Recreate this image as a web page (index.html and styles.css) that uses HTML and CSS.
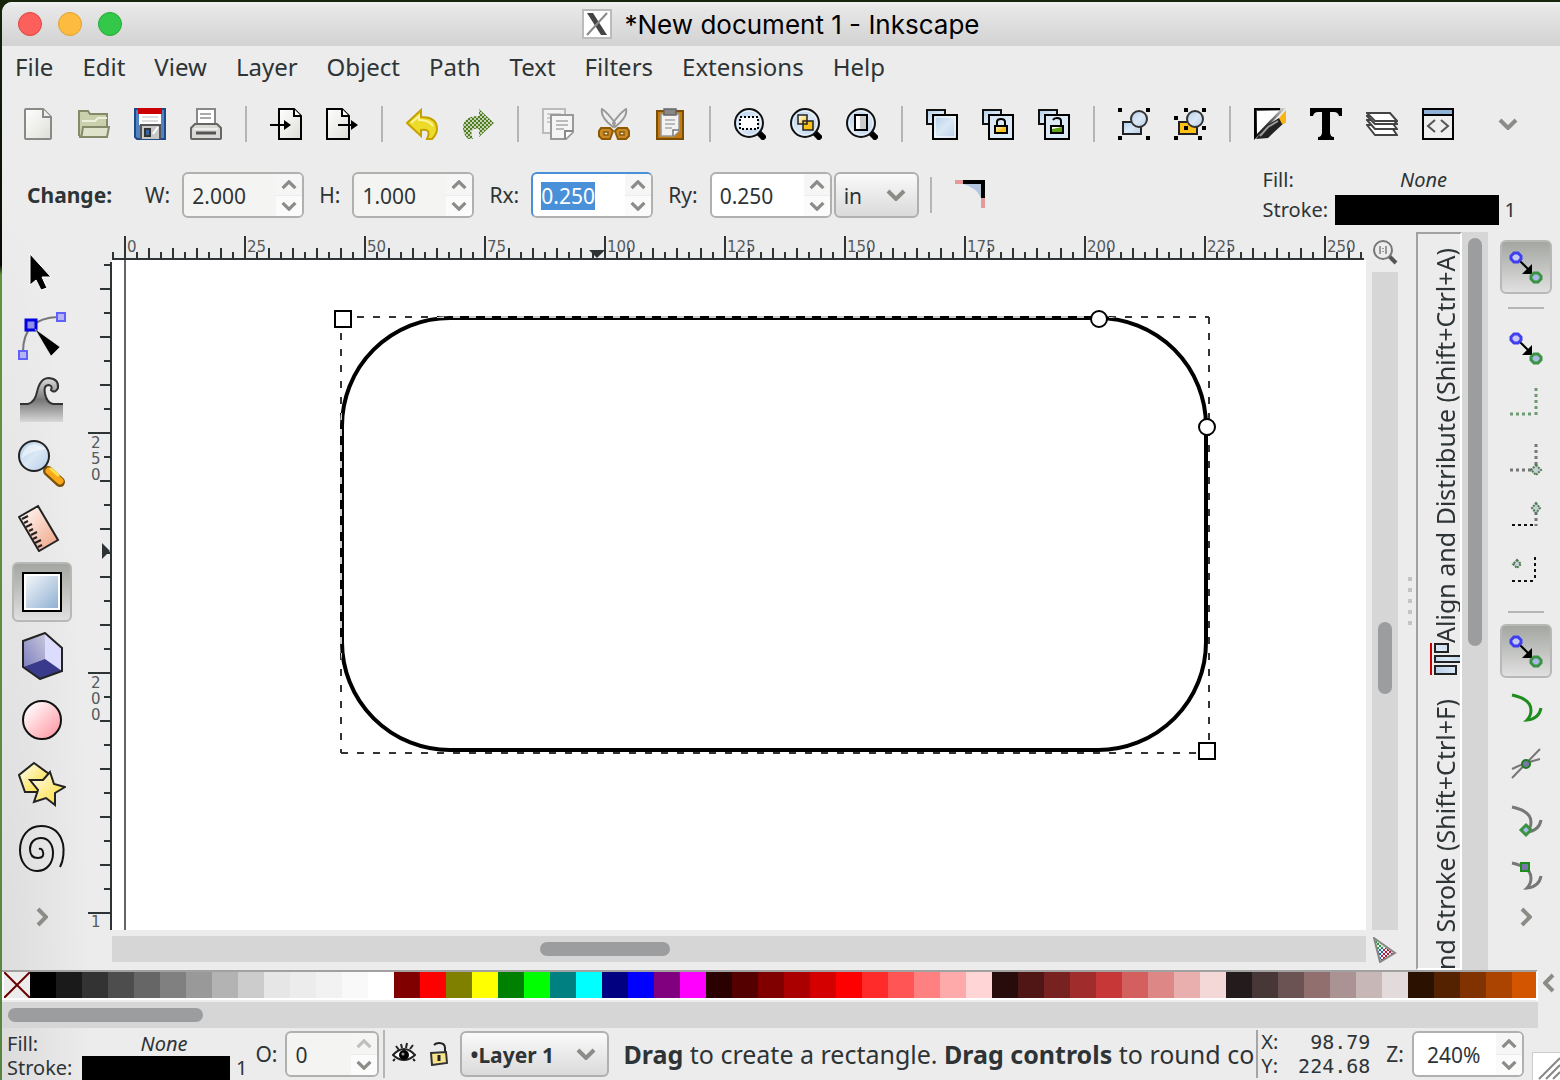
FILE: index.html
```html
<!DOCTYPE html>
<html lang="en">
<head>
    <meta charset="UTF-8">
    <meta name="viewport" content="width=device-width, initial-scale=1.0">
    <title>New document 1 - Inkscape</title>
    <link rel="stylesheet" href="styles.css">
</head>
<body>
    <!-- shared gradients, patterns and symbols -->
    <svg class="defs" aria-hidden="true">
        <defs>
            <linearGradient id="blue" x1="0" y1="0" x2="1" y2="1"><stop offset="0" stop-color="#f4f6f8"/><stop offset="1" stop-color="#8fb1d4"/></linearGradient>
            <linearGradient id="lens" x1="0" y1="0" x2="1" y2="1"><stop offset="0" stop-color="#aecbe8"/><stop offset=".5" stop-color="#dbe8f5"/><stop offset="1" stop-color="#b4cde8"/></linearGradient>
            <linearGradient id="pink" x1="0" y1="0" x2="1" y2="1"><stop offset=".1" stop-color="#fff"/><stop offset="1" stop-color="#ff8f9b"/></linearGradient>
            <linearGradient id="yellow" x1="0" y1="0" x2="1" y2="1"><stop offset="0" stop-color="#fff"/><stop offset=".8" stop-color="#fce14d"/></linearGradient>
            <linearGradient id="gold" x1="0" y1="0" x2="1" y2="1"><stop offset="0" stop-color="#fff"/><stop offset=".6" stop-color="#fbc116"/></linearGradient>
            <linearGradient id="skin" x1="0" y1="0" x2="1" y2="1"><stop offset="0" stop-color="#fff"/><stop offset="1" stop-color="#f0a080"/></linearGradient>
            <linearGradient id="page" x1="0" y1="0" x2="1" y2="1"><stop offset="0" stop-color="#fff"/><stop offset="1" stop-color="#deded8"/></linearGradient>
            <linearGradient id="wave" x1="0" y1="0" x2="0" y2="1"><stop offset="0" stop-color="#ddd"/><stop offset=".5" stop-color="#777"/><stop offset="1" stop-color="#d8d8d8"/></linearGradient>
            <linearGradient id="boxside" x1="0" y1="1" x2="1" y2="0"><stop offset="0" stop-color="#7f7fc0"/><stop offset="1" stop-color="#c8c8dc"/></linearGradient>
            <linearGradient id="ink" x1="0" y1="1" x2="1" y2="0"><stop offset="0" stop-color="#000"/><stop offset=".5" stop-color="#444"/><stop offset="1" stop-color="#ddd"/></linearGradient>
            <pattern id="checker" width="4" height="4" patternUnits="userSpaceOnUse"><path fill="#c5d2b4" d="M0 0h4v4H0z"/><path fill="#4e7d22" d="M0 0h2v2H0zM2 2h2v2H2z"/></pattern>
            <pattern id="screen" width="4" height="4" patternUnits="userSpaceOnUse"><path fill="#ececec" d="M0 0h2v2H0zM2 2h2v2H2z"/></pattern>
            <pattern id="ticks-x" x="12" width="120" height="28" patternUnits="userSpaceOnUse">
                <path fill="#2e3436" d="M0 4h2v24H0zM12 20h2v8h-2zM24 16h2v12h-2zM36 20h2v8h-2zM48 16h2v12h-2zM60 20h2v8h-2zM72 16h2v12h-2zM84 20h2v8h-2zM96 16h2v12h-2zM108 20h2v8h-2z"/>
            </pattern>
            <pattern id="ticks-y" y="172" width="24" height="240" patternUnits="userSpaceOnUse">
                <path fill="#2e3436" d="M0 0h24v2H0zM16 24h8v2h-8zM12 48h12v2H12zM16 72h8v2h-8zM12 96h12v2H12zM16 120h8v2h-8zM12 144h12v2H12zM16 168h8v2h-8zM12 192h12v2H12zM16 216h8v2h-8z"/>
            </pattern>
        </defs>
        <symbol id="down" viewBox="0 0 20 12"><path class="chev" d="M2 2l8 8 8-8"/></symbol>
        <symbol id="up" viewBox="0 0 20 12"><path class="chev" d="M2 10l8-8 8 8"/></symbol>
        <symbol id="right" viewBox="0 0 12 20"><path class="chev" d="M2 2l8 8-8 8"/></symbol>
        <symbol id="left" viewBox="0 0 12 20"><path class="chev" d="M10 2L2 10l8 8"/></symbol>
        <symbol id="magnifier" viewBox="0 0 32 32">
            <path stroke="#000" stroke-width="6" d="M23 23l8 8"/>
            <circle cx="15" cy="15" r="14" fill="url(#lens)" stroke="#111" stroke-width="2"/>
            <circle cx="15" cy="15" r="12" fill="none" stroke="#fff" stroke-opacity=".7"/>
        </symbol>
        <symbol id="snap" viewBox="0 0 36 36">
            <path d="M12 12l10 10" stroke="#000" stroke-width="2"/>
            <path d="M24 15v10H14z"/>
            <path d="M6 4h4l3 3v3l-3 3H6l-3-3V7z" fill="#c8c8f4" stroke="#3f3ff0" stroke-width="3"/>
            <path d="M26 24h4l3 3v3l-3 3h-4l-3-3v-3z" fill="#a9b9e4" stroke="#3a9343" stroke-width="3"/>
        </symbol>
        <symbol id="curve" viewBox="0 0 36 36"><path fill="none" stroke="currentColor" stroke-width="3" d="M4 5q19 4 19 15 0 6-4 10 12-1 14-12"/></symbol>
    </svg>

    <div class="window">
        <header class="titlebar">
            <div class="lights">
                <button class="light close" aria-label="Close"></button>
                <button class="light minimise" aria-label="Minimise"></button>
                <button class="light zoom" aria-label="Zoom"></button>
            </div>
            <h1 class="title">
                <svg width="30" height="30" viewBox="0 0 30 30"><path fill="#fff" stroke="#bbb" stroke-width="2" d="M1 1h28v28H1z"/><path fill="#444" d="M5 4h6l14 22h-6z"/><path stroke="#888" stroke-width="2" d="M25 4L5 26"/></svg>
                <span>*New document 1 - Inkscape</span>
            </h1>
        </header>

        <nav class="menu">
            <button>File</button><button>Edit</button><button>View</button><button>Layer</button><button>Object</button><button>Path</button><button>Text</button><button>Filters</button><button>Extensions</button><button>Help</button>
        </nav>

        <div class="toolbar">
            <button aria-label="New"><svg viewBox="0 0 32 32"><path d="M3 2q0-1 1-1h17l8 8v21q0 1-1 1H4q-1 0-1-1z" fill="url(#page)" stroke="#888a85" stroke-width="2"/><path d="M21 1v8h8" fill="#eee" stroke="#888a85" stroke-width="2"/></svg></button>
            <button aria-label="Open"><svg viewBox="0 0 32 32"><path d="M1 28V3h9l2 3h17v14" fill="#c9d0ab" stroke="#858a6b" stroke-width="2"/><path d="M4 13h13l3-3h9" fill="none" stroke="#eef0de" stroke-width="2"/><path d="M5 19h26l-2 10H1q3 0 3-4z" fill="#dfe3cb" stroke="#858a6b" stroke-width="2"/></svg></button>
            <button aria-label="Save"><svg viewBox="0 0 32 32"><path d="M1 1h30v30H3l-2-2z" fill="#4f83c4" stroke="#204a87" stroke-width="2"/><path fill="#fff" d="M5 0h22v17H5z"/><path fill="#c00" d="M4 0h24v6H4z"/><path d="M8 9h16M8 13h16" stroke="#ddd" stroke-width="2"/><path d="M7 31V17h19v14" fill="#c8c8c8" stroke="#555" stroke-width="2"/><path fill="#3465a4" stroke="#333" stroke-width="2" d="M11 21h5v7h-5z"/><path stroke="#fff" stroke-width="2" d="M19 26l5-7"/></svg></button>
            <button aria-label="Print"><svg viewBox="0 0 32 32"><path d="M7 18V1h18v17" fill="#fff" stroke="#888" stroke-width="2"/><path d="M10 6h11M10 10h11" stroke="#aaa" stroke-width="2"/><path d="M2 31q-1 0-1-1V20l4-4h22l4 4v10q0 1-1 1z" fill="#d9dad6" stroke="#666" stroke-width="2"/><path d="M4 21h24" stroke="#eee" stroke-width="2"/><path d="M6 25h20" stroke="#555" stroke-width="3"/></svg></button>
            <span class="sep"></span>
            <button aria-label="Import"><svg viewBox="0 0 32 32"><path d="M9 1h15l7 7v23H9z" fill="url(#page)" stroke="#000" stroke-width="2"/><path d="M24 1v7h7" fill="#fff" stroke="#000" stroke-width="2"/><path d="M0 17h16" stroke="#000" stroke-width="2"/><path d="M14 12l7 5-7 5z"/></svg></button>
            <button aria-label="Export"><svg viewBox="0 0 32 32"><path d="M1 1h15l7 7v23H1z" fill="url(#page)" stroke="#000" stroke-width="2"/><path d="M16 1v7h7" fill="#fff" stroke="#000" stroke-width="2"/><path d="M12 17h16" stroke="#000" stroke-width="2"/><path d="M25 12l7 5-7 5z"/></svg></button>
            <span class="sep"></span>
            <button aria-label="Undo"><svg viewBox="0 0 32 32"><path d="M1 15L15 2v7q16 0 16 12 0 5-5 10h-5q5-11-6-9v6z" fill="#eddb2a" stroke="#c4a000" stroke-width="2"/><path d="M5 15l8-7v4q10 0 14 6" fill="none" stroke="#fbf3a0" stroke-width="2"/></svg></button>
            <button aria-label="Redo"><svg viewBox="0 0 32 32"><path d="M32 15L17 1v7Q1 8 1 20q0 6 5 11h5q-5-12 6-10v8z" fill="url(#checker)"/></svg></button>
            <span class="sep"></span>
            <button aria-label="Copy"><svg viewBox="0 0 32 32"><path d="M1 1h22v24H1z" fill="#f2f2f2" stroke="#bbb" stroke-width="2"/><path d="M5 6h14M5 10h4M5 14h4" stroke="#ccc" stroke-width="2"/><path d="M9 7h22v17l-7 7H9z" fill="#f5f5f5" stroke="#999" stroke-width="2"/><path d="M14 13h12M14 17h12M14 21h8" stroke="#bbb" stroke-width="2"/><path d="M23 31v-8h8" fill="#fff" stroke="#888" stroke-width="2"/></svg></button>
            <button aria-label="Cut"><svg viewBox="0 0 32 32"><path d="M4 1q-2 8 11 18l2-4Q10 5 4 1zM28 1q2 8-11 18l-2-4Q22 5 28 1z" fill="#eee" stroke="#999" stroke-width="2"/><path d="M3 20h9l3 3-3 8H4l-3-3v-5zM29 20h-9l-3 3 3 8h8l3-3v-5z" fill="#c98a2a" stroke="#8f5902" stroke-width="2"/><path d="M6 24h4v3H6zM22 24h4v3h-4z" fill="#eee" stroke="#8f5902" stroke-width="1.5"/></svg></button>
            <button aria-label="Paste"><svg viewBox="0 0 32 32"><path d="M3 3h26v28H3z" fill="#c17d11" stroke="#7c4d02" stroke-width="2"/><path d="M7 6h18v17l-5 5H7z" fill="#f2f2f2" stroke="#999" stroke-width="1.5"/><path d="M10 1h12v6H10z" fill="#888" stroke="#666" stroke-width="1.5"/><path d="M11 12h10M11 16h10M11 20h7" stroke="#bbb" stroke-width="2"/><path d="M19 28v-6h6" fill="#fff" stroke="#777" stroke-width="1.5"/></svg></button>
            <span class="sep"></span>
            <button aria-label="Zoom selection"><svg viewBox="0 0 32 32"><use href="#magnifier"/><path d="M6 9h18v12H6z" fill="#fff" stroke="#000" stroke-width="2" stroke-dasharray="2 2"/></svg></button>
            <button aria-label="Zoom drawing"><svg viewBox="0 0 32 32"><use href="#magnifier"/><path d="M8 7h9v9H8zM13 13h10v9H13z" fill="url(#gold)" stroke="#222" stroke-width="1.5"/></svg></button>
            <button aria-label="Zoom page"><svg viewBox="0 0 32 32"><use href="#magnifier"/><path d="M9 7h12v15H9z" fill="#ccc" stroke="#000" stroke-width="2"/><path fill="#fff" d="M10 8h4v13h-4z"/></svg></button>
            <span class="sep"></span>
            <button aria-label="Duplicate"><svg viewBox="0 0 32 32"><path d="M1 2h18v14H1z" fill="url(#lens)" stroke="#111" stroke-width="2"/><path d="M7 7h24v24H7z" fill="url(#lens)" stroke="#000" stroke-width="2"/><path d="M9 9h20v20H9z" fill="none" stroke="#fff"/></svg></button>
            <button aria-label="Clone"><svg viewBox="0 0 32 32"><path d="M1 2h18v14H1z" fill="url(#lens)" stroke="#111" stroke-width="2"/><path d="M7 7h24v24H7z" fill="#dbe8f5" stroke="#000" stroke-width="2"/><path d="M15 18v-4q0-3 4-3t4 3v4" fill="none" stroke="#000" stroke-width="2"/><path d="M13 18h12v7H13z" fill="url(#gold)" stroke="#000" stroke-width="2"/></svg></button>
            <button aria-label="Unlink clone"><svg viewBox="0 0 32 32"><path d="M1 2h18v14H1z" fill="url(#lens)" stroke="#111" stroke-width="2"/><path d="M7 7h24v24H7z" fill="#dbe8f5" stroke="#000" stroke-width="2"/><path d="M15 12q1-2 4-2 4 0 4 3v5" fill="none" stroke="#000" stroke-width="2"/><path d="M13 18h12v7H13z" fill="#fff" stroke="#000" stroke-width="2"/><path fill="#5fa01a" d="M14 21l10-2v5H14z"/></svg></button>
            <span class="sep"></span>
            <button aria-label="Group"><svg viewBox="0 0 32 32"><path d="M5 14h18v12H5z" fill="url(#lens)" stroke="#222" stroke-width="2"/><circle cx="21" cy="11" r="8" fill="url(#lens)" stroke="#333" stroke-width="2"/><path d="M0 0h4v4H0zM28 0h4v4h-4zM0 28h4v4H0zM28 28h4v4h-4z"/></svg></button>
            <button aria-label="Ungroup"><svg viewBox="0 0 32 32"><path d="M5 14h18v12H5z" fill="#fbc116" stroke="#222" stroke-width="2"/><circle cx="21" cy="11" r="8" fill="url(#lens)" stroke="#333" stroke-width="2"/><path d="M10 0h4v4h-4zM28 0h4v4h-4zM0 8h4v4H0zM10 18h4v4h-4zM28 18h4v4h-4zM0 28h4v4H0zM24 28h4v4h-4z"/></svg></button>
            <span class="sep"></span>
            <button aria-label="Fill and stroke"><svg viewBox="0 0 32 32"><path fill="url(#ink)" d="M0 0h32L0 32z"/><path fill="#000" d="M0 0h26v2H2v28H0z"/><path fill="#fff" d="M3 3h22L3 26z"/><path fill="#222" d="M32 13l-7-3L12 18 2 31l12-1z"/><path d="M6 28l8-9 10-6" fill="none" stroke="#999" stroke-width="2"/><path fill="#fbb415" d="M25 10l7-8v13l-4 1z"/></svg></button>
            <button aria-label="Text and font"><svg viewBox="0 0 32 32"><path d="M0 0h32v8h-3q-1-4-5-4h-4v20q0 5 4 5v3H8v-3q4 0 4-5V4H8Q4 4 3 8H0z"/></svg></button>
            <button aria-label="Layers"><svg viewBox="0 0 32 32"><g fill="#fff" stroke="#444" stroke-width="2"><path d="M1 17h23l7 10H9z"/><path d="M1 12h23l7 9H9z"/><path d="M1 8h23l7 8H9z"/><path d="M1 5h23l7 8H9z"/></g></svg></button>
            <button aria-label="XML editor"><svg viewBox="0 0 32 32"><path d="M1 1h30v30H1z" fill="#eee" stroke="#000" stroke-width="2"/><path d="M2 2h28v4H2z" fill="#8fb1d9"/><path d="M1 7h30" stroke="#000" stroke-width="2"/><path d="M13 12l-7 6 7 6M19 12l7 6-7 6" fill="none" stroke="#555" stroke-width="2"/></svg></button>
            <button class="more" aria-label="More commands"><svg class="arrow" viewBox="0 0 20 12"><use href="#down"/></svg></button>
        </div>

        <div class="controls">
            <strong class="change">Change:</strong>
            <label for="w">W:</label>
            <div class="spin muted"><input id="w" type="text" value="2.000"><button aria-label="Increase width"><svg><use href="#up"/></svg></button><button aria-label="Decrease width"><svg><use href="#down"/></svg></button></div>
            <label for="h">H:</label>
            <div class="spin muted"><input id="h" type="text" value="1.000"><button aria-label="Increase height"><svg><use href="#up"/></svg></button><button aria-label="Decrease height"><svg><use href="#down"/></svg></button></div>
            <label for="rx">Rx:</label>
            <div class="spin active"><input id="rx" type="text" value="0.250" autofocus><button aria-label="Increase Rx"><svg><use href="#up"/></svg></button><button aria-label="Decrease Rx"><svg><use href="#down"/></svg></button></div>
            <label for="ry">Ry:</label>
            <div class="spin"><input id="ry" type="text" value="0.250"><button aria-label="Increase Ry"><svg><use href="#up"/></svg></button><button aria-label="Decrease Ry"><svg><use href="#down"/></svg></button></div>
            <select class="unit" aria-label="Unit"><option>in</option></select>
            <span class="sep"></span>
            <button class="corner" aria-label="Not rounded"><svg width="32" height="30" viewBox="0 0 32 30"><path fill="#b5c7df" d="M8 4h18v14Q22 8 8 4z"/><path fill="#e29a9a" d="M0 0h10v4H0zM26 18h4v10h-4z"/><path d="M8 0h22v18h-4V4H8z"/></svg></button>
            <div class="style">
                <span>Fill:</span><em>None</em><i></i>
                <span>Stroke:</span><button class="ink" aria-label="Stroke colour"></button><span>1</span>
            </div>
        </div>

        <main class="workspace">
            <div class="toolbox">
                <button aria-label="Select"><svg viewBox="0 0 48 48"><path d="M12 6v31l6-5 5 10 6-2-5-11h9z" stroke="#fff"/></svg></button>
                <button aria-label="Edit nodes"><svg viewBox="0 0 48 48"><path d="M5 40Q5 6 40 5" fill="none" stroke="#777" stroke-width="2"/><path d="M8 8h10v10H8z" fill="#8f8fe8" stroke="#0000e0" stroke-width="3"/><path d="M39 1h8v8h-8zM1 39h8v8H1z" fill="#b5b5f5" stroke="#6060ff" stroke-width="2"/><path d="M17 17l25 18-9 9-6-10z" stroke="#fff" stroke-width=".5"/></svg></button>
                <button aria-label="Tweak"><svg viewBox="0 0 48 48"><path d="M2 28h8q7-2 9-12Q22 2 31 2q10 1 9 10-3 6-7 2 2-4-2-5-6 0-4 9 2 9 8 10h10v18H2z" fill="url(#wave)"/><path d="M2 28h8q7-2 9-12Q22 2 31 2q10 1 9 10-3 6-7 2 2-4-2-5-6 0-4 9 2 9 8 10h10" fill="none" stroke="#333" stroke-width="2"/></svg></button>
                <button aria-label="Zoom"><svg viewBox="0 0 48 48"><path d="M27 27l5 5" stroke="#666" stroke-width="5"/><path d="M30 31l12 11" stroke="#7a5210" stroke-width="10" stroke-linecap="round"/><path d="M31 31l11 10" stroke="#f9a81a" stroke-width="7" stroke-linecap="round"/><path d="M32 28l9 8" stroke="#ffe14d" stroke-width="3"/><circle cx="16" cy="16" r="15" fill="url(#lens)" stroke="#222" stroke-width="2"/><path d="M4 18Q5 5 17 4L28 9Q14 10 4 18z" fill="#fff" opacity=".5"/></svg></button>
                <button aria-label="Measure"><svg viewBox="0 0 48 48"><path d="M20 2l20 34-19 11L1 13z" fill="url(#skin)" stroke="#222" stroke-width="2"/><path d="M4 15l6-3M6 19l4-2M8 23l6-3M11 27l4-2M13 31l6-3M15 35l4-2M17 39l6-3M20 43l4-2" stroke="#222" stroke-width="2"/></svg></button>
                <button class="on" aria-label="Rectangle"><svg viewBox="0 0 48 48"><path d="M5 5h38v38H5z" fill="#fff" stroke="#000" stroke-width="2"/><path d="M8 8h32v32H8z" fill="url(#blue)"/></svg></button>
                <button aria-label="3D box"><svg viewBox="0 0 48 48"><path d="M27 1v26L5 35V9z" fill="url(#boxside)"/><path d="M27 1l17 15v23L27 27z" fill="#dcdcff"/><path d="M27 27l17 12-22 8L5 35z" fill="#3a3a8c"/><path d="M27 1l17 15v23l-22 8L5 35V9z" fill="none" stroke="#222" stroke-width="2"/></svg></button>
                <button aria-label="Ellipse"><svg viewBox="0 0 48 48"><circle cx="24" cy="24" r="19" fill="url(#pink)" stroke="#111" stroke-width="2"/></svg></button>
                <button aria-label="Star"><svg viewBox="0 0 48 48"><g fill="url(#yellow)" stroke="#222" stroke-width="2"><path d="M16 3l15 11-6 18H7L1 15z"/><path d="M32 12l4 12 11 3-10 6v12l-9-7-12 4 4-12-8-10h13z"/></g></svg></button>
                <button aria-label="Spiral"><svg viewBox="0 0 48 48"><path fill="none" stroke="#111" stroke-width="2" d="M42 43C46 36 46 25 45 20 42 8 34 2 23 2 10 2 2 13 2 26c0 12 7 21 17 21s16-8 16-18c0-9-5-15-12-15s-11 5-11 11 3 9 8 9 6-3 5-6q-1-4-4-3"/></svg></button>
                <button class="more" aria-label="More tools"><svg class="side" viewBox="0 0 12 20"><use href="#right"/></svg></button>
            </div>

            <div class="editor">
                <svg class="ruler-x">
                    <rect width="100%" height="28" fill="url(#ticks-x)"/>
                    <rect x="2" y="26" width="100%" height="2" fill="#2e3436"/>
                    <path fill="#2e3436" d="M477 18h16l-8 8z"/>
                    <g id="labels-x"></g>
                </svg>
                <svg class="ruler-y">
                    <rect y="2" width="24" height="100%" fill="url(#ticks-y)"/>
                    <rect x="22" y="2" width="2" height="100%" fill="#2e3436"/>
                    <path fill="#2e3436" d="M14 283v16l8-8z"/>
                    <text x="3" y="188">2</text><text x="3" y="204">5</text><text x="3" y="220">0</text>
                    <text x="3" y="428">2</text><text x="3" y="444">0</text><text x="3" y="460">0</text>
                    <text x="3" y="667">1</text>
                </svg>
                <svg class="canvas">
                    <rect width="100%" height="100%" fill="#fff"/>
                    <rect x="12" width="2" height="100%" fill="#666"/>
                    <rect x="230" y="58" width="864" height="432" rx="108" fill="none" stroke="#000" stroke-width="4"/>
                    <path class="bbox" d="M229 57h868M229 493h868M229 57v436M1097 57v436"/>
                    <g fill="#fff" stroke="#000" stroke-width="2">
                        <path d="M223 51h16v16h-16zM1087 483h16v16h-16z"/>
                        <circle cx="987" cy="59" r="8"/>
                        <circle cx="1095" cy="167" r="8"/>
                    </g>
                </svg>
                <div class="track track-x"><div class="thumb"></div></div>
            </div>

            <div class="side-scroll">
                <button aria-label="Zoom 1:1"><svg width="26" height="26" viewBox="0 0 26 26"><path d="M17 17l7 7" stroke="#555" stroke-width="4"/><circle cx="11" cy="11" r="9" fill="#ececec" stroke="#777" stroke-width="2"/><path d="M8 7v8M14 7v8M11 9v1M11 12v1" stroke="#999" stroke-width="2"/></svg></button>
                <div class="track track-y"><div class="thumb"></div></div>
                <button aria-label="Colour management"><svg width="24" height="26" viewBox="0 0 24 26"><path fill="#2a9a3a" d="M1 1l11 10-8 5z"/><path fill="#2463a8" d="M3 14l9-4-4 15z"/><path fill="#b02040" d="M11 10l11 6-14 8z"/><path fill="url(#screen)" d="M0 0h24v26H0z"/><path d="M1 1l21 15L7 25z" fill="none" stroke="#888" stroke-width="2"/></svg></button>
            </div>

            <div class="grip"></div>

            <div class="dock">
                <div class="tabs">
                    <button><svg width="30" height="32" viewBox="0 0 30 32"><path stroke="#c00" stroke-width="2" d="M29 0v32"/><path d="M12 1h13v8H12zM-1 13h26v6H-1zM4 23h21v8H4z" transform="matrix(1 0 0 -1 0 32)" fill="url(#lens)" stroke="#222" stroke-width="2"/></svg>Align and Distribute (Shift+Ctrl+A)</button>
                    <button>Fill and Stroke (Shift+Ctrl+F)</button>
                </div>
                <div class="track track-dock"><div class="thumb"></div></div>
            </div>

            <div class="snapbar">
                <button class="on" aria-label="Enable snapping"><svg><use href="#snap"/></svg></button>
                <hr>
                <button aria-label="Snap bounding boxes"><svg><use href="#snap"/></svg></button>
                <button aria-label="Snap to edges"><svg viewBox="0 0 36 36"><path class="dots green" d="M2 28h24M28 2v27"/></svg></button>
                <button aria-label="Snap to corners"><svg viewBox="0 0 36 36"><path class="dots" d="M2 28h24M28 2v27"/><path class="node" d="M28 23l5 5-5 5-5-5z"/></svg></button>
                <button aria-label="Snap edge midpoints"><svg viewBox="0 0 36 36"><path class="dots" d="M28 14v14"/><path class="dots black" d="M4 27h24"/><path class="node" d="M28 5l4 5-4 5-4-5z"/></svg></button>
                <button aria-label="Snap box centers"><svg viewBox="0 0 36 36"><path class="dots black" d="M4 27h24M27 3v24"/><path class="node" d="M9 6l4 4-4 4-4-4z"/></svg></button>
                <hr>
                <button class="on" aria-label="Snap nodes"><svg><use href="#snap"/></svg></button>
                <button class="green" aria-label="Snap to paths"><svg><use href="#curve"/></svg></button>
                <button aria-label="Snap to intersections"><svg viewBox="0 0 36 36"><path d="M4 32L32 3M4 23q12-6 28-10" fill="none" stroke="#777" stroke-width="2"/><circle cx="18" cy="18" r="4" fill="#77a" stroke="#1e7d1e" stroke-width="2"/></svg></button>
                <button aria-label="Snap cusp nodes"><svg viewBox="0 0 36 36"><use href="#curve"/><path d="M18 23l5 5-5 5-5-5z" fill="#a9b9e9" stroke="#3a9343" stroke-width="3"/></svg></button>
                <button aria-label="Snap smooth nodes"><svg viewBox="0 0 36 36"><use href="#curve"/><path d="M13 5h8v8h-8z" fill="#77a" stroke="#1e8d1e" stroke-width="2"/></svg></button>
                <button class="more" aria-label="More snapping"><svg class="side" viewBox="0 0 12 20"><use href="#right"/></svg></button>
            </div>
        </main>

        <div class="palette">
            <div class="swatches">
                <button class="swatch none" aria-label="No colour"><svg width="26" height="26" viewBox="0 0 26 26"><path d="M0 0l26 26M26 0L0 26" stroke="#6b0000" stroke-width="2"/></svg></button>
            </div>
            <button class="more" aria-label="Palette menu"><svg class="side" viewBox="0 0 12 20"><use href="#left"/></svg></button>
            <div class="track track-palette"><div class="thumb"></div></div>
        </div>

        <footer class="status">
            <div class="style">
                <span>Fill:</span><em>None</em><i></i>
                <span>Stroke:</span><button class="ink" aria-label="Stroke colour"></button><span>1</span>
            </div>
            <label for="opacity">O:</label>
            <div class="spin muted opacity"><input id="opacity" type="text" value="0"><button class="off" aria-label="Increase opacity"><svg><use href="#up"/></svg></button><button aria-label="Decrease opacity"><svg><use href="#down"/></svg></button></div>
            <span class="sep"></span>
            <div class="toggles">
                <button aria-label="Layer visibility"><svg width="24" height="24" viewBox="0 0 24 24"><path d="M1 13q11-12 22 0-11 10-22 0z" fill="#fff" stroke="#222" stroke-width="2"/><circle cx="12" cy="13" r="5"/><circle cx="11" cy="12" r="1.5" fill="#999"/><path d="M4 4l3 4M9 2l1 4M14 6l1-5M18 7l3-4M3 17l-2 2M21 17l2 2" stroke="#222" stroke-width="2"/></svg></button>
                <button aria-label="Lock layer"><svg width="24" height="24" viewBox="0 0 24 24"><path d="M6 3q2-2 5-2 6 0 6 5v6" fill="none" stroke="#222" stroke-width="2"/><path d="M3 11l15-1 1 11-15 2z" fill="#f5e48a" stroke="#333" stroke-width="2"/><path d="M11 13v6" stroke="#222" stroke-width="3"/></svg></button>
            </div>
            <select class="layer" aria-label="Layer"><option>•Layer 1</option></select>
            <p class="hint"><b>Drag</b> to create a rectangle. <b>Drag controls</b> to round corners</p>
            <dl class="coords"><dt>X:</dt><dd>98.79</dd><dt>Y:</dt><dd>224.68</dd></dl>
            <label for="zoom">Z:</label>
            <div class="spin zoomlevel"><input id="zoom" type="text" value="240%"><button aria-label="Zoom in"><svg><use href="#up"/></svg></button><button aria-label="Zoom out"><svg><use href="#down"/></svg></button></div>
            <svg class="resize" viewBox="0 0 28 28"><path fill="#fff" stroke="#ccc" stroke-width="2" d="M0 0h30v30H0z"/><path d="M7 27L28 6M14 27l14-14M21 27l7-7" stroke="#888" stroke-width="2"/></svg>
        </footer>
    </div>

    <script>
        const colours = [
            '#000', '#1a1a1a', '#333', '#4d4d4d', '#666', '#808080', '#999', '#b3b3b3', '#ccc', '#e6e6e6', '#ececec', '#f2f2f2', '#f9f9f9', '#fff',
            '#800000', '#f00', '#808000', '#ff0', '#008000', '#0f0', '#008080', '#0ff', '#000080', '#00f', '#800080', '#f0f',
            '#2b0000', '#500', '#800000', '#a00', '#d40000', '#f00', '#ff2a2a', '#f55', '#ff8080', '#faa', '#ffd5d5',
            '#280b0b', '#501616', '#782121', '#a02c2c', '#c83737', '#d35f5f', '#de8787', '#e9afaf', '#f4d7d7',
            '#241c1c', '#483737', '#6c5353', '#916f6f', '#ac9393', '#c8b7b7', '#e3dbdb',
            '#2b1100', '#520', '#803300', '#a40', '#d45500'
        ];
        const swatches = document.querySelector('.swatches');
        colours.forEach((colour) => {
            const swatch = document.createElement('button');
            swatch.className = 'swatch';
            swatch.style.background = colour;
            swatch.setAttribute('aria-label', colour);
            swatches.appendChild(swatch);
        });

        // one label every 25 units, 120px apart
        let labels = '';
        for (let i = 0; i <= 10; i++) {
            labels += `<text x="${15 + i * 120}" y="20">${i * 25}</text>`;
        }
        document.querySelector('#labels-x').innerHTML = labels;

        const rx = document.querySelector('#rx');
        rx.focus();
        rx.select();
    </script>
</body>
</html>
```
FILE: styles.css
```css
*{
    box-sizing: border-box;
}
body{
    margin: 0;
    height: 100vh;
    overflow: hidden;
    padding: 2px 0 0 2px;
    background: linear-gradient(#16240c 0, #050a03 265px, #5d9440 275px, #568540 100%);
    font-family: "Noto Sans", "Open Sans", sans-serif;
    font-size: 21px;
    color: #2e3436;
}
.defs{
    position: absolute;
    width: 0;
    height: 0;
}
button{
    padding: 0;
    border: none;
    background: none;
    font: inherit;
    color: inherit;
}
svg{
    display: block;
}
.chev{
    fill: none;
    stroke: #8a8c87;
    stroke-width: 4;
}
.window{
    display: flex;
    flex-direction: column;
    height: 100%;
    border-radius: 10px 0 0 0;
    overflow: hidden;
    background: radial-gradient(90px 900px at 0 100%, rgba(0,0,0,.07), rgba(0,0,0,0)), #ececec;
}

/* title bar */
.titlebar{
    display: grid;
    grid-template-columns: 1fr auto 1fr;
    align-items: center;
    flex: none;
    height: 44px;
    background: linear-gradient(#f2f2f2, #e8e8e8 10%, #d2d2d2);
}
.lights{
    display: flex;
    gap: 16px;
    padding-left: 16px;
}
.light{
    width: 24px;
    height: 24px;
    border-radius: 50%;
    border: 1px solid;
}
.close{
    background: #fc605c;
    border-color: #e0443e;
}
.minimise{
    background: #fdbc40;
    border-color: #dfa033;
}
.zoom{
    background: #34c84a;
    border-color: #24a935;
}
.title{
    display: flex;
    align-items: center;
    gap: 12px;
    margin: 0;
    font-family: Inter, sans-serif;
    font-size: 26px;
    font-weight: 400;
    color: #000;
}

/* menu */
.menu{
    display: flex;
    flex: none;
    gap: 29px;
    height: 44px;
    padding: 0 0 4px 13px;
    font-size: 24px;
}

/* command bar */
.toolbar{
    display: flex;
    align-items: center;
    flex: none;
    height: 68px;
    padding: 0 24px 0 8px;
}
.toolbar button{
    display: grid;
    place-items: center;
    width: 56px;
    height: 56px;
}
.toolbar svg{
    width: 32px;
    height: 32px;
}
.toolbar .more{
    margin-left: auto;
}
.toolbar .arrow{
    width: 20px;
    height: 12px;
}
.sep{
    width: 2px;
    height: 36px;
    margin: 0 11px;
    background: #b5b5b5;
}

/* rectangle controls */
.controls{
    display: flex;
    align-items: center;
    flex: none;
    height: 74px;
    padding: 0 44px 0 25px;
}
.controls label{
    margin: 0 12px 0 15px;
}
.controls .change{
    margin-right: 18px;
}
.spin{
    display: grid;
    grid-template-columns: 1fr 26px;
    grid-template-rows: 1fr 1fr;
    width: 122px;
    height: 46px;
    border: 2px solid #b0b1ae;
    border-radius: 6px;
    overflow: hidden;
    background: #fff;
}
.spin input{
    grid-row: 1 / 3;
    width: 100%;
    min-width: 0;
    padding: 2px 0 0 8px;
    border: none;
    outline: none;
    background: none;
    font: inherit;
    color: inherit;
}
.spin button{
    display: grid;
    place-items: center;
    background: #f6f6f6;
}
.spin button + button{
    background: #fbfbfb;
    border-top: 1px solid #ececec;
}
.spin svg{
    width: 16px;
    height: 10px;
}
.spin .off{
    opacity: .5;
}
.muted{
    background: #f4f4f2;
}
.active{
    border-color: #4a90d9 #b0b1ae #b0b1ae #4a90d9;
}
input::selection{
    background: #4a90d9;
    color: #fff;
}
select{
    appearance: none;
    height: 46px;
    padding: 2px 8px 0;
    border: 2px solid #b0b1ae;
    border-radius: 6px;
    background: url("data:image/svg+xml,%3Csvg xmlns='http://www.w3.org/2000/svg' width='20' height='12'%3E%3Cpath d='M2 2l8 8 8-8' fill='none' stroke='%238a8c87' stroke-width='4'/%3E%3C/svg%3E") right 11px center no-repeat, linear-gradient(#fafafa, #dadada);
    font: inherit;
    color: inherit;
}
.unit{
    width: 85px;
    margin-left: 2px;
}
.corner{
    margin-left: 12px;
}
.style{
    display: grid;
    grid-template-columns: 66px 164px auto;
    align-items: center;
    column-gap: 6px;
    font-size: 20px;
    line-height: 30px;
}
.style em{
    text-align: center;
    padding-left: 14px;
}
.ink{
    align-self: stretch;
    background: #000;
}
.controls .style{
    margin-left: auto;
}

/* work area */
.workspace{
    display: flex;
    flex: 1;
    min-height: 0;
}
.toolbox{
    display: flex;
    flex-direction: column;
    align-items: center;
    flex: none;
    gap: 4px;
    width: 86px;
    padding: 10px 6px 0 0;
}
.toolbox button{
    display: grid;
    place-items: center;
    flex: none;
    width: 60px;
    height: 60px;
}
.toolbox svg{
    width: 48px;
    height: 48px;
}
.on{
    border: 2px solid #b8b9b6;
    border-radius: 6px;
    background: linear-gradient(#a3a6a1, #e0e0e0);
}
.editor{
    display: grid;
    grid-template-columns: 24px 1fr;
    grid-template-rows: 28px 1fr 40px;
    flex: 1;
    min-width: 0;
}
.editor text{
    font-family: "DejaVu Sans", sans-serif;
    font-size: 15px;
    fill: #555a5c;
}
.ruler-x{
    grid-column: 2;
    width: 100%;
    height: 28px;
    padding-right: 2px;
}
.ruler-y{
    grid-column: 1;
    width: 24px;
    height: 100%;
}
.canvas{
    width: 100%;
    height: 100%;
    isolation: isolate;
}
.bbox{
    stroke: #ccc;
    stroke-width: 2;
    stroke-dasharray: 7 9;
    mix-blend-mode: difference;
}
.track{
    background: #d6d6d6;
}
.thumb{
    border-radius: 7px;
    background: #9c9d9e;
}
.track-x{
    grid-column: 2;
    height: 26px;
    margin-top: 6px;
    padding: 6px 0;
}
.track-x .thumb{
    width: 130px;
    height: 14px;
    margin-left: 428px;
}
.side-scroll{
    display: flex;
    flex-direction: column;
    flex: none;
    width: 32px;
    margin-right: 10px;
    padding-left: 6px;
}
.side-scroll button{
    display: grid;
    place-items: center;
    height: 40px;
}
.track-y{
    flex: 1;
    padding: 350px 6px 0;
}
.track-y .thumb{
    height: 72px;
}
.grip{
    align-self: center;
    flex: none;
    width: 4px;
    height: 48px;
    margin-right: 4px;
    background: repeating-linear-gradient(#c4c4c0 0, #c4c4c0 4px, #ececec 4px, #ececec 11px);
}
.dock{
    display: flex;
    flex: none;
    width: 72px;
}
.tabs{
    display: flex;
    flex-direction: column;
    gap: 24px;
    width: 46px;
    padding: 14px 0 0 12px;
    overflow: hidden;
    border: 2px solid #a0a1a0;
    border-right-color: #fff;
    border-bottom-color: #fff;
    font-size: 25px;
    line-height: 30px;
}
.tabs button{
    display: flex;
    align-items: center;
    flex: none;
    width: 30px;
    writing-mode: vertical-rl;
    transform: rotate(180deg);
    white-space: nowrap;
}
.track-dock{
    flex: 1;
    padding: 6px 6px 0;
}
.track-dock .thumb{
    height: 408px;
}
.snapbar{
    display: flex;
    flex-direction: column;
    align-items: center;
    flex: none;
    width: 72px;
    padding: 8px 0 0 4px;
    color: #777;
}
.snapbar button{
    display: grid;
    place-items: center;
    flex: none;
    width: 52px;
    height: 56px;
}
.snapbar .on{
    height: 54px;
    margin-bottom: 2px;
}
.snapbar svg{
    width: 36px;
    height: 36px;
}
.snapbar hr{
    flex: none;
    width: 36px;
    height: 2px;
    margin: 11px 0;
    border: none;
    background: #b5b5b5;
}
.snapbar .green{
    color: #1e8d1e;
}
.dots{
    fill: none;
    stroke: #777;
    stroke-width: 3;
    stroke-dasharray: 3 3;
}
.dots.green{
    stroke: #6d9a70;
}
.dots.black{
    stroke: #111;
    stroke-width: 2;
}
.node{
    fill: #c5d0d8;
    stroke: #4d7a50;
    stroke-width: 2;
    stroke-dasharray: 2 1;
}
.more .side{
    width: 12px;
    height: 20px;
}
.workspace .more{
    height: 26px;
}
.toolbox .more{
    margin-top: 22px;
}

/* palette */
.palette{
    display: grid;
    grid-template-columns: 1fr 22px;
    flex: none;
}
.swatches{
    display: flex;
    overflow: hidden;
    height: 32px;
    padding-left: 2px;
    border-top: 2px solid #a0a1a0;
    border-right: 2px solid #fff;
    border-bottom: 2px solid #ececec;
    background: #fff;
}
.swatch{
    flex: none;
    width: 26px;
    height: 26px;
}
.none{
    background: #ececec;
}
.palette .more{
    display: grid;
    place-items: center;
    height: 26px;
}
.track-palette{
    height: 26px;
    padding: 6px;
}
.track-palette .thumb{
    width: 195px;
    height: 14px;
}

/* status bar */
.status{
    display: flex;
    align-items: center;
    flex: none;
    height: 52px;
    padding-left: 5px;
}
.status .style{
    grid-template-columns: 69px 148px auto;
    line-height: 24px;
    margin-top: 4px;
}
.status .style em{
    padding-left: 16px;
}
.status label{
    margin: 0 8px;
}
.opacity{
    width: 94px;
}
.status .sep{
    height: 48px;
    margin: 0 7px 0 4px;
}
.toggles{
    display: flex;
    gap: 12px;
    margin-right: 8px;
}
.layer{
    width: 149px;
    font-weight: 700;
}
.hint{
    flex: 1;
    min-width: 0;
    margin: 0 0 0 14px;
    overflow: hidden;
    white-space: nowrap;
    font-size: 25px;
}
.coords{
    display: grid;
    grid-template-columns: 24px 85px;
    align-items: center;
    margin: 0 8px 0 0;
    padding-left: 3px;
    border-left: 2px solid #a5a5a5;
    font-size: 20px;
    line-height: 24px;
}
.coords dd{
    margin: 0;
    text-align: right;
    font-family: "DejaVu Sans Mono", monospace;
}
.zoomlevel{
    width: 112px;
}
.zoomlevel input{
    padding-left: 13px;
}
.resize{
    align-self: flex-end;
    width: 28px;
    height: 28px;
    margin-left: 8px;
}
```
